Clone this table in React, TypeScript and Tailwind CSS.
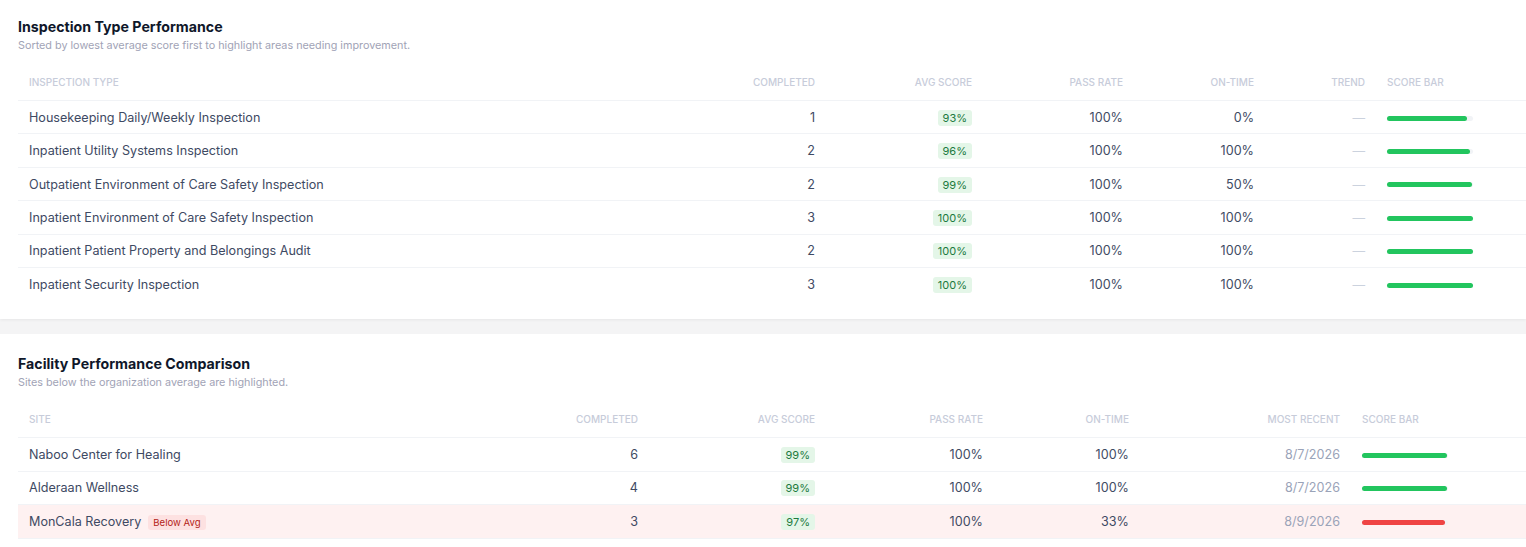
import React from 'react';

interface TypeRow {
  name: string;
  completed: number;
  avg: number;
  pass: string;
  onTime: string;
}

interface SiteRow {
  name: string;
  completed: number;
  avg: number;
  pass: string;
  onTime: string;
  recent: string;
  below?: boolean;
}

const typeRows: TypeRow[] = [
  { name: 'Housekeeping Daily/Weekly Inspection', completed: 1, avg: 93, pass: '100%', onTime: '0%' },
  { name: 'Inpatient Utility Systems Inspection', completed: 2, avg: 96, pass: '100%', onTime: '100%' },
  { name: 'Outpatient Environment of Care Safety Inspection', completed: 2, avg: 99, pass: '100%', onTime: '50%' },
  { name: 'Inpatient Environment of Care Safety Inspection', completed: 3, avg: 100, pass: '100%', onTime: '100%' },
  { name: 'Inpatient Patient Property and Belongings Audit', completed: 2, avg: 100, pass: '100%', onTime: '100%' },
  { name: 'Inpatient Security Inspection', completed: 3, avg: 100, pass: '100%', onTime: '100%' },
];

const siteRows: SiteRow[] = [
  { name: 'Naboo Center for Healing', completed: 6, avg: 99, pass: '100%', onTime: '100%', recent: '8/7/2026' },
  { name: 'Alderaan Wellness', completed: 4, avg: 99, pass: '100%', onTime: '100%', recent: '8/7/2026' },
  { name: 'MonCala Recovery', completed: 3, avg: 97, pass: '100%', onTime: '33%', recent: '8/9/2026', below: true },
];

const font = { fontFamily: 'Inter, "Noto Sans", sans-serif' };

const ScoreBadge = ({ value }: { value: number }) => (
  <span className="inline-block rounded-[3px] bg-[#e4f6e8] px-[5px] py-[1px] text-[11px] leading-[14px] text-[#1d7a3e]">
    {value}%
  </span>
);

const ScoreBar = ({ value, red }: { value: number; red?: boolean }) => (
  <div className="h-[5px] w-[86px] rounded-full bg-[#f1f3f6]">
    <div
      className={`h-[5px] rounded-full ${red ? 'bg-[#ef4444]' : 'bg-[#22c55e]'}`}
      style={{ width: `${value}%` }}
    />
  </div>
);

const Heading = ({ title, sub }: { title: string; sub: string }) => (
  <div>
    <h2 className="text-[14.2px] leading-5 font-bold text-[#0f172a]">{title}</h2>
    <p className="mt-[1px] text-[10.8px] leading-4 text-[#a1a3b6]">{sub}</p>
  </div>
);

const th = 'px-[11px] text-[10px] font-medium uppercase text-[#c7ccda] flex items-center';

const App = () => {
  const typeCols = 'grid grid-cols-[668px_140px_157px_151px_131px_111px_1fr]';
  const siteCols = 'grid grid-cols-[491px_140px_177px_168px_146px_211px_1fr]';

  return (
    <div className="min-h-screen bg-[#f4f4f5]" style={font}>
      {/* Inspection type table */}
      <section className="bg-white pl-[18px] pt-[17px] pb-[18px] shadow-[0_1px_3px_rgba(0,0,0,0.06)]">
        <Heading
          title="Inspection Type Performance"
          sub="Sorted by lowest average score first to highlight areas needing improvement."
        />
        <div className="mt-[11px]">
          <div className={`${typeCols} h-9 border-b border-[#f1f3f6]`}>
            <div className={th}>Inspection Type</div>
            <div className={`${th} justify-end`}>Completed</div>
            <div className={`${th} justify-end`}>Avg Score</div>
            <div className={`${th} justify-end`}>Pass Rate</div>
            <div className={`${th} justify-end`}>On-Time</div>
            <div className={`${th} justify-end`}>Trend</div>
            <div className={th}>Score Bar</div>
          </div>
          {typeRows.map((r, i) => (
            <div
              key={r.name}
              className={`${typeCols} h-[33.4px] items-center pt-[2px] text-[12.6px] text-[#3e4a63] ${
                i < typeRows.length - 1 ? 'border-b border-[#f1f3f6]' : ''
              }`}
            >
              <div className="px-[11px]">{r.name}</div>
              <div className="px-[11px] text-right">{r.completed}</div>
              <div className="px-[11px] text-right"><ScoreBadge value={r.avg} /></div>
              <div className="px-[11px] text-right">{r.pass}</div>
              <div className="px-[11px] text-right">{r.onTime}</div>
              <div className="px-[11px] text-right text-[#cbd2de]">—</div>
              <div className="px-[11px]"><ScoreBar value={r.avg} /></div>
            </div>
          ))}
        </div>
      </section>

      {/* Facility comparison table */}
      <section className="mt-[15px] bg-white pl-[18px] pt-5 pb-4">
        <Heading
          title="Facility Performance Comparison"
          sub="Sites below the organization average are highlighted."
        />
        <div className="mt-[11px]">
          <div className={`${siteCols} h-9 border-b border-[#f1f3f6]`}>
            <div className={th}>Site</div>
            <div className={`${th} justify-end`}>Completed</div>
            <div className={`${th} justify-end`}>Avg Score</div>
            <div className={`${th} justify-end`}>Pass Rate</div>
            <div className={`${th} justify-end`}>On-Time</div>
            <div className={`${th} justify-end`}>Most Recent</div>
            <div className={th}>Score Bar</div>
          </div>
          {siteRows.map((r) => (
            <div
              key={r.name}
              className={`${siteCols} h-[33.4px] items-center border-b border-[#f1f3f6] pt-[2px] text-[12.6px] text-[#3e4a63] ${
                r.below ? 'bg-[#fef1f1]' : ''
              }`}
            >
              <div className="flex items-center gap-[7px] px-[11px]">
                {r.name}
                {r.below && (
                  <span className="rounded-[3px] bg-[#fde1e1] px-[5px] py-[1px] text-[9.6px] leading-[13px] text-[#b42318]">
                    Below Avg
                  </span>
                )}
              </div>
              <div className="px-[11px] text-right">{r.completed}</div>
              <div className="px-[11px] text-right"><ScoreBadge value={r.avg} /></div>
              <div className="px-[11px] text-right">{r.pass}</div>
              <div className="px-[11px] text-right">{r.onTime}</div>
              <div className="px-[11px] text-right text-[#9aa3b8]">{r.recent}</div>
              <div className="px-[11px]"><ScoreBar value={r.avg} red={r.below} /></div>
            </div>
          ))}
        </div>
      </section>
    </div>
  );
};

export default App;
